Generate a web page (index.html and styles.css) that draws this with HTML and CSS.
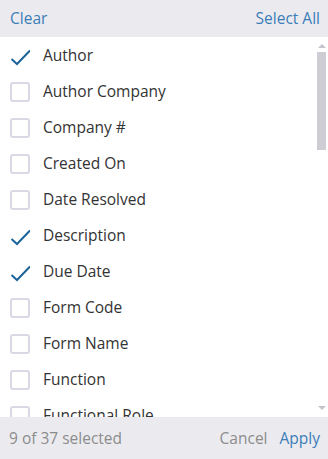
FILE: index.html
```html
<!DOCTYPE html>
<html lang="en">
<head>
  <meta charset="UTF-8" />
  <meta name="viewport" content="width=device-width, initial-scale=1.0" />
  <title>Column Picker</title>
  <link rel="stylesheet" href="styles.css">
</head>
<body>
  <div class="picker">
    <div class="picker-head">
      <a class="link">Clear</a>
      <a class="link">Select All</a>
    </div>

    <div class="picker-body">
      <ul class="options">
        <li class="option checked"><span class="box"><svg viewBox="0 0 20 20"><path d="M1.5 13 L7 18 L20 4.5" /></svg></span>Author</li>
        <li class="option"><span class="box"></span>Author Company</li>
        <li class="option"><span class="box"></span>Company #</li>
        <li class="option"><span class="box"></span>Created On</li>
        <li class="option"><span class="box"></span>Date Resolved</li>
        <li class="option checked"><span class="box"><svg viewBox="0 0 20 20"><path d="M1.5 13 L7 18 L20 4.5" /></svg></span>Description</li>
        <li class="option checked"><span class="box"><svg viewBox="0 0 20 20"><path d="M1.5 13 L7 18 L20 4.5" /></svg></span>Due Date</li>
        <li class="option"><span class="box"></span>Form Code</li>
        <li class="option"><span class="box"></span>Form Name</li>
        <li class="option"><span class="box"></span>Function</li>
        <li class="option"><span class="box"></span>Functional Role</li>
      </ul>
      <!-- fake scrollbar sits over the list -->
      <div class="scrollbar">
        <span class="arrow up"></span>
        <span class="thumb"></span>
        <span class="arrow down"></span>
      </div>
    </div>

    <div class="picker-foot">
      <span class="count">9 of 37 selected</span>
      <div class="actions">
        <a class="muted">Cancel</a>
        <a class="link">Apply</a>
      </div>
    </div>
  </div>
</body>
</html>
```

FILE: styles.css
```css
body {
  margin: 0;
  font-family: "Open Sans", "Noto Sans", sans-serif;
  font-size: 15.5px;
  color: #333;
  background: #fff;
}
.picker {
  width: 328px;
  height: 459px;
  display: flex;
  flex-direction: column;
}
.picker-head {
  height: 37px;
  flex: none;
  background: #ebebef;
  display: flex;
  justify-content: space-between;
  align-items: center;
  padding: 0 8px 2px 10px;
  box-sizing: border-box;
}
.link {
  color: #3b7db8;
}
.muted {
  color: #8c8c8c;
}
.picker-body {
  flex: 1;
  position: relative;
  overflow: hidden;
}
.options {
  list-style: none;
  margin: 0;
  padding: 0;
}
.option {
  height: 36px;
  display: flex;
  align-items: center;
  padding-left: 10px;
  gap: 13px;
}
.box {
  width: 20px;
  height: 20px;
  flex: none;
  box-sizing: border-box;
  border: 2px solid #d9d9e3;
  border-radius: 3px;
  margin-top: 1px;
}
.checked .box {
  border: none;
}
.box svg {
  width: 20px;
  height: 20px;
  display: block;
}
.box path {
  fill: none;
  stroke: #1d6499;
  stroke-width: 2;
}
.scrollbar {
  position: absolute;
  top: 0;
  right: 2px;
  bottom: 0;
  width: 9px;
  display: flex;
  flex-direction: column;
  align-items: center;
}
.arrow {
  width: 0;
  height: 0;
  border-left: 4px solid transparent;
  border-right: 4px solid transparent;
}
.arrow.up {
  margin-top: 7px;
  border-bottom: 4px solid #c4c4cc;
}
.arrow.down {
  margin-top: auto;
  margin-bottom: 7px;
  border-top: 4px solid #c4c4cc;
}
.thumb {
  width: 9px;
  height: 98px;
  margin-top: 4px;
  background: #cdcdd3;
}
.picker-foot {
  height: 42px;
  flex: none;
  background: #ebebef;
  display: flex;
  justify-content: space-between;
  align-items: center;
  padding: 0 8px 0 9px;
  box-sizing: border-box;
}
.count {
  color: #8c8c8c;
}
.actions {
  display: flex;
  gap: 12px;
}
```
